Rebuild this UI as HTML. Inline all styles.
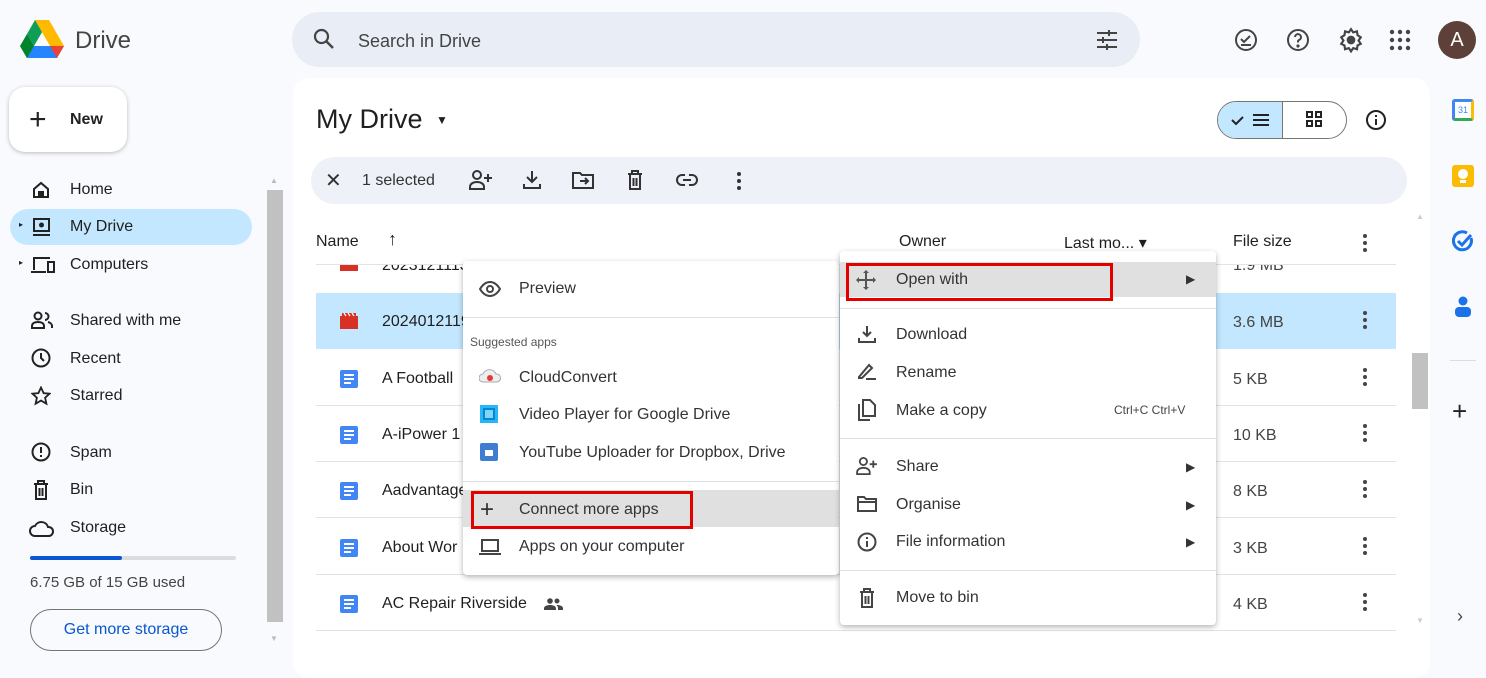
<!DOCTYPE html>
<html><head><meta charset="utf-8"><style>
*{box-sizing:border-box;margin:0;padding:0}
body{width:1486px;height:648px;overflow:hidden;background:#f8fafd;font-family:"Liberation Sans",sans-serif;color:#1f1f1f;position:relative}
.a{position:absolute}
.t{position:absolute;white-space:nowrap}
svg{position:absolute}
.nav{font-size:16px;color:#1f1f1f}
.row{position:absolute;left:316px;width:1080px;height:56px;border-bottom:1px solid #e3e3e3}
.doc{position:absolute;left:24px;top:20px;width:18px;height:18px;background:#4285f4;border-radius:2px}
.doc i{position:absolute;left:4px;height:2px;background:#fff;width:10px}
.fn{position:absolute;left:66px;top:20px;font-size:16px}
.sz{position:absolute;left:917px;top:21px;font-size:16px;color:#444}
.dots{position:absolute;left:1047px;top:18px;width:4px;height:18px}
.dots b{display:block;width:4px;height:4px;border-radius:2px;background:#444;margin-bottom:3px}
.menu{background:#fff;border-radius:4px;box-shadow:0 2px 6px rgba(0,0,0,.3)}
.mi{position:absolute;font-size:16px;color:#333}
.sep{position:absolute;height:1px;background:#e0e0e0}
</style></head><body>
<!-- logo -->
<svg style="left:20px;top:20px" width="44" height="40" viewBox="0 0 44 40">
<polygon points="15,0 29,0 14,26 7,14" fill="#0f9d58"/>
<polygon points="29,0 44,26 30,26 15,0" fill="#ffba00"/>
<polygon points="0,26 14,26 30,26 44,26 37,38 7,38" fill="#2684fc"/>
<polygon points="0,26 7,14 14,26 7,38" fill="#00832d"/>
<polygon points="44,26 37,38 30,26" fill="#ea4335"/>
</svg>
<div class="t" style="left:75px;top:27px;font-size:24px;color:#444">Drive</div>
<!-- search -->
<div class="a" style="left:292px;top:12px;width:848px;height:55px;border-radius:28px;background:#e9eef6"></div>
<svg style="left:313px;top:28px" width="22" height="22" viewBox="0 0 22 22"><circle cx="8.5" cy="8.5" r="6.5" fill="none" stroke="#444" stroke-width="2.2"/><line x1="13.5" y1="13.5" x2="20" y2="20" stroke="#444" stroke-width="2.4"/></svg>
<div class="t" style="left:358px;top:31px;font-size:18px;color:#444">Search in Drive</div>
<svg style="left:1095px;top:28px" width="24" height="24" viewBox="0 0 24 24" stroke="#444" stroke-width="2"><line x1="2" y1="5" x2="22" y2="5"/><line x1="2" y1="12" x2="22" y2="12"/><line x1="2" y1="19" x2="22" y2="19"/><line x1="14" y1="2" x2="14" y2="8" /><line x1="8" y1="9" x2="8" y2="15"/><line x1="12" y1="16" x2="12" y2="22"/></svg>
<!-- top right icons -->
<svg style="left:1234px;top:28px" width="24" height="24" viewBox="0 0 24 24" fill="none" stroke="#444" stroke-width="2"><circle cx="12" cy="12" r="10"/><path d="M7 11l3 3 6-6M7 17h10"/></svg>
<svg style="left:1286px;top:28px" width="24" height="24" viewBox="0 0 24 24" fill="none" stroke="#444" stroke-width="2"><circle cx="12" cy="12" r="10"/><path d="M9 9a3 3 0 1 1 4 3c-1 .5-1 1-1 2.5"/><circle cx="12" cy="18" r=".6" fill="#444"/></svg>
<svg style="left:1338px;top:27px" width="26" height="26" viewBox="0 0 24 24" fill="none" stroke="#444" stroke-width="2"><path d="M12 2l2 3 3.5-1 .5 3.5 3 2-2 3 2 3-3 1.5-.5 3.5-3.5-1-2 3-2-3-3.5 1-.5-3.5-3-1.5 2-3-2-3 3-2L6.5 4 10 5z"/><circle cx="12" cy="12" r="3" fill="#444"/></svg>
<svg style="left:1389px;top:29px" width="22" height="22" viewBox="0 0 22 22" fill="#444"><circle cx="3" cy="3" r="2.2"/><circle cx="11" cy="3" r="2.2"/><circle cx="19" cy="3" r="2.2"/><circle cx="3" cy="11" r="2.2"/><circle cx="11" cy="11" r="2.2"/><circle cx="19" cy="11" r="2.2"/><circle cx="3" cy="19" r="2.2"/><circle cx="11" cy="19" r="2.2"/><circle cx="19" cy="19" r="2.2"/></svg>
<div class="a" style="left:1438px;top:21px;width:38px;height:38px;border-radius:50%;background:#5d4037;color:#fff;font-size:20px;text-align:center;line-height:38px">A</div>
<!-- new -->
<div class="a" style="left:9px;top:87px;width:118px;height:65px;border-radius:16px;background:#fff;box-shadow:0 1px 4px rgba(0,0,0,.25)"></div>
<div class="t" style="left:29px;top:103px;font-size:30px;font-weight:300;color:#222">+</div>
<div class="t" style="left:70px;top:111px;font-size:16px;font-weight:bold;color:#222">New</div>
<!-- nav -->
<div class="a" style="left:10px;top:209px;width:242px;height:36px;border-radius:18px;background:#c2e7ff"></div>
<svg style="left:32px;top:181px" width="18" height="18" viewBox="0 0 18 18" fill="none" stroke="#222" stroke-width="2"><path d="M2 8l7-6 7 6v8H2z"/><rect x="7" y="11" width="4" height="5" fill="#222"/></svg>
<div class="t nav" style="left:70px;top:181px">Home</div>
<div class="t" style="left:19px;top:220px;font-size:8px">▸</div>
<svg style="left:32px;top:217px" width="20" height="20" viewBox="0 0 20 20"><rect x="1" y="1" width="17" height="14" fill="#222"/><rect x="3" y="3" width="13" height="10" fill="#c2e7ff"/><circle cx="9.5" cy="8" r="2.5" fill="#222"/><rect x="1" y="17" width="17" height="2" fill="#222"/></svg>
<div class="t nav" style="left:70px;top:218px">My Drive</div>
<div class="t" style="left:19px;top:258px;font-size:8px">▸</div>
<svg style="left:30px;top:256px" width="26" height="18" viewBox="0 0 26 18" fill="none" stroke="#222" stroke-width="2"><path d="M4 14V2h16M1 16h15"/><rect x="18" y="6" width="6" height="10"/></svg>
<div class="t nav" style="left:70px;top:256px">Computers</div>
<svg style="left:31px;top:311px" width="22" height="18" viewBox="0 0 22 18" fill="none" stroke="#222" stroke-width="2"><circle cx="7" cy="5" r="3.5"/><path d="M1 17v-2c0-3 3-4 6-4s6 1 6 4v2zM14 2a3.5 3.5 0 0 1 0 7M17 11c2 .5 4 2 4 4v2"/></svg>
<div class="t nav" style="left:70px;top:312px">Shared with me</div>
<svg style="left:31px;top:348px" width="20" height="20" viewBox="0 0 20 20" fill="none" stroke="#222" stroke-width="2"><circle cx="10" cy="10" r="8.5"/><path d="M10 5v5l3 3"/></svg>
<div class="t nav" style="left:70px;top:350px">Recent</div>
<svg style="left:31px;top:386px" width="20" height="20" viewBox="0 0 20 20" fill="none" stroke="#222" stroke-width="1.8"><path d="M10 1.5l2.6 5.6 6 .6-4.5 4 1.3 6-5.4-3.1-5.4 3.1 1.3-6-4.5-4 6-.6z"/></svg>
<div class="t nav" style="left:70px;top:387px">Starred</div>
<svg style="left:31px;top:442px" width="20" height="20" viewBox="0 0 20 20" fill="none" stroke="#222" stroke-width="2"><circle cx="10" cy="10" r="8.5"/><path d="M10 5v6M10 13v2"/></svg>
<div class="t nav" style="left:70px;top:444px">Spam</div>
<svg style="left:33px;top:480px" width="16" height="20" viewBox="0 0 16 20" fill="none" stroke="#222" stroke-width="2"><path d="M1 4h14M5 4V1h6v3M3 4v15h10V4M6.5 8v8M9.5 8v8"/></svg>
<div class="t nav" style="left:70px;top:481px">Bin</div>
<svg style="left:29px;top:520px" width="26" height="18" viewBox="0 0 26 18" fill="none" stroke="#222" stroke-width="2"><path d="M6 16a5 5 0 0 1 0-10 7 7 0 0 1 13 1 4.5 4.5 0 0 1 1 9z"/></svg>
<div class="t nav" style="left:70px;top:519px">Storage</div>
<div class="a" style="left:30px;top:556px;width:206px;height:4px;border-radius:2px;background:#dadce0"></div>
<div class="a" style="left:30px;top:556px;width:92px;height:4px;border-radius:2px;background:#0b57d0"></div>
<div class="t" style="left:30px;top:574px;font-size:15px;color:#444">6.75 GB of 15 GB used</div>
<div class="a" style="left:30px;top:609px;width:192px;height:42px;border-radius:21px;border:1px solid #747775;color:#0b57d0;font-size:16px;text-align:center;line-height:40px">Get more storage</div>
<div class="a" style="left:267px;top:190px;width:16px;height:432px;background:#c1c1c1"></div>
<div class="t" style="left:270px;top:176px;font-size:8px;color:#bbb">▲</div>
<div class="t" style="left:270px;top:634px;font-size:8px;color:#bbb">▼</div>
<!-- main panel -->
<div class="a" style="left:293px;top:78px;width:1137px;height:600px;border-radius:16px;background:#fff"></div>
<div class="t" style="left:316px;top:104px;font-size:27px;color:#1f1f1f">My Drive</div>
<div class="t" style="left:436px;top:113px;font-size:12px">▼</div>
<div class="a" style="left:1217px;top:101px;width:130px;height:38px;border-radius:19px;border:1px solid #747775;overflow:hidden"><div class="a" style="left:0;top:0;width:65px;height:38px;background:#c2e7ff;border-right:1px solid #747775"></div></div>
<svg style="left:1231px;top:112px" width="40" height="16" viewBox="0 0 40 16" fill="none" stroke="#222" stroke-width="2"><path d="M1 8l4 4 7-7M22 3h16M22 8h16M22 13h16"/></svg>
<svg style="left:1306px;top:111px" width="16" height="16" viewBox="0 0 16 16" fill="none" stroke="#222" stroke-width="2"><rect x="1" y="1" width="5" height="5"/><rect x="10" y="1" width="5" height="5"/><rect x="1" y="10" width="5" height="5"/><rect x="10" y="10" width="5" height="5"/></svg>
<svg style="left:1365px;top:109px" width="22" height="22" viewBox="0 0 22 22" fill="none" stroke="#222" stroke-width="2"><circle cx="11" cy="11" r="9"/><path d="M11 10v6M11 6v2"/></svg>
<!-- toolbar -->
<div class="a" style="left:311px;top:157px;width:1096px;height:47px;border-radius:24px;background:#eef2f8"></div>
<div class="t" style="left:325px;top:168px;font-size:20px;color:#333">✕</div>
<div class="t" style="left:362px;top:172px;font-size:16px;color:#333">1 selected</div>
<svg style="left:469px;top:170px" width="24" height="20" viewBox="0 0 24 20" fill="none" stroke="#333" stroke-width="2"><circle cx="8" cy="5" r="4"/><path d="M1 19v-2c0-3 3-5 7-5s7 2 7 5v2zM19 4v8M15 8h8"/></svg>
<svg style="left:523px;top:170px" width="18" height="20" viewBox="0 0 18 20" fill="none" stroke="#333" stroke-width="2"><path d="M9 1v11M4 7l5 5 5-5M1 14v4h16v-4"/></svg>
<svg style="left:572px;top:171px" width="22" height="18" viewBox="0 0 22 18" fill="none" stroke="#333" stroke-width="2"><path d="M1 2h7l2 2h11v13H1z"/><path d="M8 10h8M13 7l3 3-3 3"/></svg>
<svg style="left:627px;top:170px" width="16" height="20" viewBox="0 0 16 20" fill="none" stroke="#333" stroke-width="2"><path d="M1 4h14M5 4V1h6v3M3 4v15h10V4M6.5 8v8M9.5 8v8"/></svg>
<svg style="left:676px;top:173px" width="22" height="14" viewBox="0 0 22 14" fill="none" stroke="#333" stroke-width="2"><path d="M9 2H6a5 5 0 0 0 0 10h3M13 2h3a5 5 0 0 1 0 10h-3M7 7h8"/></svg>
<div class="a" style="left:737px;top:172px;width:4px"><div style="width:4px;height:4px;background:#333;border-radius:2px;margin-bottom:3px"></div><div style="width:4px;height:4px;background:#333;border-radius:2px;margin-bottom:3px"></div><div style="width:4px;height:4px;background:#333;border-radius:2px"></div></div>
<!-- header -->
<div class="t" style="left:316px;top:233px;font-size:16px">Name</div>
<div class="t" style="left:388px;top:229px;font-size:18px">↑</div>
<div class="t" style="left:899px;top:233px;font-size:16px">Owner</div>
<div class="t" style="left:1064px;top:233px;font-size:16px">Last mo... ▾</div>
<div class="t" style="left:1233px;top:233px;font-size:16px">File size</div>
<div class="dots" style="left:1363px;top:234px"><b></b><b></b><b></b></div>
<div class="a" style="left:316px;top:264px;width:1080px;height:1px;background:#e3e3e3"></div>
<!-- rows -->
<div class="row" style="top:265px;height:28px;overflow:hidden;border:none">
 <div class="a" style="left:24px;top:-6px;width:18px;height:12px;background:#d93025"></div>
 <div class="fn" style="top:-8px">20231211134</div><div class="sz" style="top:-8px">1.9 MB</div>
</div>
<div class="row" style="top:293px;background:#c2e7ff;border:none">
 <svg style="left:24px;top:20px" width="18" height="16" viewBox="0 0 18 16"><rect y="3" width="18" height="13" fill="#d93025"/><path d="M2 0h14v3H2z" fill="#d93025"/><path d="M4 0l2 3M8 0l2 3M12 0l2 3" stroke="#fff" stroke-width="1.2"/></svg>
 <div class="fn">20240121190</div><div class="sz">3.6 MB</div><div class="dots"><b></b><b></b><b></b></div>
</div>
<div class="row" style="top:350px"><div class="doc"><i style="top:4px"></i><i style="top:8px"></i><i style="top:12px;width:7px"></i></div><div class="fn">A Football</div><div class="sz">5 KB</div><div class="dots"><b></b><b></b><b></b></div></div>
<div class="row" style="top:406px"><div class="doc"><i style="top:4px"></i><i style="top:8px"></i><i style="top:12px;width:7px"></i></div><div class="fn">A-iPower 1</div><div class="sz">10 KB</div><div class="dots"><b></b><b></b><b></b></div></div>
<div class="row" style="top:462px"><div class="doc"><i style="top:4px"></i><i style="top:8px"></i><i style="top:12px;width:7px"></i></div><div class="fn">Aadvantage</div><div class="sz">8 KB</div><div class="dots"><b></b><b></b><b></b></div></div>
<div class="row" style="top:519px"><div class="doc"><i style="top:4px"></i><i style="top:8px"></i><i style="top:12px;width:7px"></i></div><div class="fn">About Wor</div><div class="sz">3 KB</div><div class="dots"><b></b><b></b><b></b></div></div>
<div class="row" style="top:575px"><div class="doc"><i style="top:4px"></i><i style="top:8px"></i><i style="top:12px;width:7px"></i></div><div class="fn">AC Repair Riverside</div>
<svg style="left:228px;top:23px" width="20" height="12" viewBox="0 0 20 12" fill="#444"><circle cx="6" cy="3" r="2.8"/><circle cx="13" cy="3" r="2.5"/><path d="M0 12v-1.5C0 8 3 7 6 7s6 1 6 3.5V12zM13 7c3 0 6 1 6 3.5V12h-5v-1.5c0-1.5-.5-2.5-1.5-3.2z"/></svg>
<div class="sz">4 KB</div><div class="dots"><b></b><b></b><b></b></div></div>
<!-- main scrollbar -->
<div class="a" style="left:1412px;top:353px;width:16px;height:56px;background:#c1c1c1"></div>
<div class="t" style="left:1416px;top:212px;font-size:8px;color:#ccc">▲</div>
<div class="t" style="left:1416px;top:616px;font-size:8px;color:#ccc">▼</div>
<!-- left menu -->
<div class="a menu" style="left:463px;top:261px;width:376px;height:314px"></div>
<svg style="left:479px;top:281px" width="22" height="16" viewBox="0 0 22 16" fill="none" stroke="#444" stroke-width="2"><path d="M1 8c3-5 6-7 10-7s7 2 10 7c-3 5-6 7-10 7S4 13 1 8z"/><circle cx="11" cy="8" r="3"/></svg>
<div class="mi" style="left:519px;top:280px">Preview</div>
<div class="sep" style="left:463px;top:317px;width:376px"></div>
<div class="mi" style="left:470px;top:335px;font-size:12px;color:#555">Suggested apps</div>
<svg style="left:479px;top:368px" width="22" height="16" viewBox="0 0 22 16"><path d="M4 14a4 4 0 0 1 0-8 7 7 0 0 1 13 0 4 4 0 0 1 1 8z" fill="#eee" stroke="#aaa"/><circle cx="11" cy="10" r="3" fill="#e53935"/></svg>
<div class="mi" style="left:519px;top:369px">CloudConvert</div>
<div class="a" style="left:480px;top:405px;width:18px;height:18px;background:#29b6f6"><div class="a" style="left:3px;top:3px;width:12px;height:12px;background:#81d4fa;border:2px solid #0288d1"></div></div>
<div class="mi" style="left:519px;top:406px">Video Player for Google Drive</div>
<div class="a" style="left:480px;top:443px;width:18px;height:18px;background:#3f7dd3;border-radius:2px"><div class="a" style="left:5px;top:7px;width:8px;height:6px;background:#fff"></div></div>
<div class="mi" style="left:519px;top:444px">YouTube Uploader for Dropbox, Drive</div>
<div class="sep" style="left:463px;top:481px;width:376px"></div>
<div class="a" style="left:463px;top:490px;width:376px;height:37px;background:#e0e0e0"></div>
<div class="a" style="left:471px;top:491px;width:222px;height:38px;border:3px solid #e50000"></div>
<div class="mi" style="left:480px;top:496px;font-size:24px;font-weight:300">+</div>
<div class="mi" style="left:519px;top:501px">Connect more apps</div>
<svg style="left:479px;top:539px" width="22" height="16" viewBox="0 0 22 16" fill="none" stroke="#444" stroke-width="2"><rect x="3" y="1" width="16" height="11"/><path d="M0 15h22"/></svg>
<div class="mi" style="left:519px;top:538px">Apps on your computer</div>
<!-- right menu -->
<div class="a menu" style="left:840px;top:251px;width:376px;height:374px"></div>
<div class="a" style="left:840px;top:262px;width:376px;height:35px;background:#e0e0e0"></div>
<div class="a" style="left:846px;top:263px;width:267px;height:38px;border:3px solid #e50000"></div>
<svg style="left:856px;top:270px" width="20" height="20" viewBox="0 0 20 20" fill="#555"><path d="M10 0l3 3H7zM10 20l3-3H7zM0 10l3-3v6zM20 10l-3-3v6z"/><path d="M10 3v14M3 10h14" stroke="#555" stroke-width="2"/></svg>
<div class="mi" style="left:896px;top:271px">Open with</div>
<div class="mi" style="left:1186px;top:272px;font-size:12px">▶</div>
<div class="sep" style="left:840px;top:308px;width:376px"></div>
<svg style="left:858px;top:325px" width="18" height="18" viewBox="0 0 18 18" fill="none" stroke="#444" stroke-width="2"><path d="M9 1v10M5 7l4 4 4-4M1 13v4h16v-4"/></svg>
<div class="mi" style="left:896px;top:326px">Download</div>
<svg style="left:857px;top:363px" width="20" height="18" viewBox="0 0 20 18" fill="none" stroke="#444" stroke-width="2"><path d="M2 14L12 2l3 3L5 15H2zM9 16h10"/></svg>
<div class="mi" style="left:896px;top:364px">Rename</div>
<svg style="left:858px;top:399px" width="18" height="22" viewBox="0 0 18 22" fill="none" stroke="#444" stroke-width="2"><path d="M5 1h7l5 5v11H5zM1 5v16h11"/></svg>
<div class="mi" style="left:896px;top:402px">Make a copy</div>
<div class="mi" style="left:1114px;top:403px;font-size:12px;color:#444">Ctrl+C Ctrl+V</div>
<div class="sep" style="left:840px;top:438px;width:376px"></div>
<svg style="left:856px;top:457px" width="22" height="18" viewBox="0 0 24 20" fill="none" stroke="#444" stroke-width="2"><circle cx="8" cy="5" r="4"/><path d="M1 19v-2c0-3 3-5 7-5s7 2 7 5v2zM19 4v8M15 8h8"/></svg>
<div class="mi" style="left:896px;top:458px">Share</div>
<div class="mi" style="left:1186px;top:460px;font-size:12px">▶</div>
<svg style="left:857px;top:496px" width="20" height="16" viewBox="0 0 20 16" fill="none" stroke="#444" stroke-width="2"><path d="M1 1h6l2 2h10v12H1zM1 6h18"/></svg>
<div class="mi" style="left:896px;top:496px">Organise</div>
<div class="mi" style="left:1186px;top:498px;font-size:12px">▶</div>
<svg style="left:857px;top:532px" width="20" height="20" viewBox="0 0 20 20" fill="none" stroke="#444" stroke-width="2"><circle cx="10" cy="10" r="8.5"/><path d="M10 9v6M10 5v2"/></svg>
<div class="mi" style="left:896px;top:533px">File information</div>
<div class="mi" style="left:1186px;top:535px;font-size:12px">▶</div>
<div class="sep" style="left:840px;top:570px;width:376px"></div>
<svg style="left:859px;top:588px" width="16" height="20" viewBox="0 0 16 20" fill="none" stroke="#444" stroke-width="2"><path d="M1 4h14M5 4V1h6v3M3 4v15h10V4M6.5 8v8M9.5 8v8"/></svg>
<div class="mi" style="left:896px;top:589px">Move to bin</div>
<!-- right rail -->
<div class="a" style="left:1452px;top:99px;width:22px;height:22px;background:#fff;border:3px solid #4285f4;border-right-color:#fbbc04;border-bottom-color:#34a853;border-radius:3px;font-size:9px;color:#4285f4;text-align:center;line-height:16px">31</div>
<div class="a" style="left:1452px;top:165px;width:22px;height:22px;background:#fbbc04;border-radius:3px"><div class="a" style="left:6px;top:4px;width:10px;height:10px;border-radius:50%;background:#fff"></div><div class="a" style="left:8px;top:15px;width:6px;height:3px;background:#fff"></div></div>
<svg style="left:1452px;top:230px" width="22" height="22" viewBox="0 0 22 22" fill="none" stroke="#1a73e8" stroke-width="3"><path d="M19 8A9 9 0 1 1 15 3"/><path d="M6 11l4 4 9-10"/></svg>
<svg style="left:1454px;top:296px" width="18" height="22" viewBox="0 0 18 22" fill="#1a73e8"><circle cx="9" cy="5" r="4.5"/><rect x="1" y="11" width="16" height="10" rx="4"/></svg>
<div class="a" style="left:1450px;top:360px;width:26px;height:1px;background:#ddd"></div>
<div class="t" style="left:1452px;top:396px;font-size:26px;font-weight:300;color:#222">+</div>
<div class="t" style="left:1457px;top:606px;font-size:18px;color:#444">›</div>
</body></html>
